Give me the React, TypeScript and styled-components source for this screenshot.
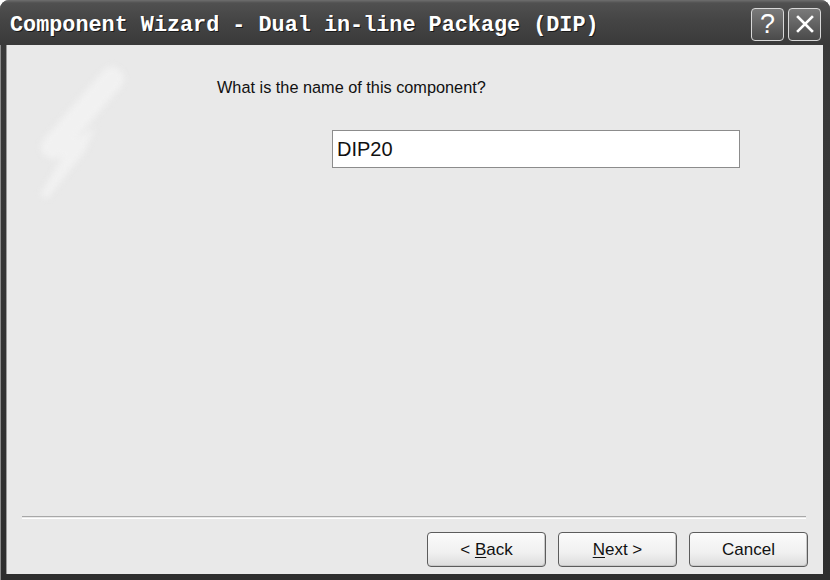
import React from "react";
import styled, { createGlobalStyle } from "styled-components";

const Global = createGlobalStyle`
  html, body { margin: 0; padding: 0; background: #ffffff; }
  body { width: 830px; height: 580px; overflow: hidden; }
`;

const Window = styled.div`
  width: 830px;
  height: 580px;
  box-sizing: border-box;
  display: flex;
  flex-direction: column;
  background: linear-gradient(#5c5c5c, #3a3a3a 40px, #2e2e2e);
  border-radius: 9px 9px 0 0;
  padding: 0 7px 6px 6px;
  box-shadow: inset 1px 1px 0 #8a8a8a;
`;

const TitleBar = styled.div`
  height: 45px;
  flex: none;
  display: flex;
  align-items: center;
  justify-content: space-between;
  margin: 0 -7px 0 -6px;
  padding-left: 10px;
  padding-right: 9px;
  background: linear-gradient(#6e6e6e 0px, #505050 3px, #454545 20px, #3a3a3a 44px);
  border-radius: 9px 9px 0 0;
`;

const Title = styled.div`
  font-family: "Liberation Mono", "Courier New", monospace;
  font-weight: bold;
  font-size: 21.8px;
  color: #ffffff;
  text-shadow: 1px 1px 0 #1a1a1a;
  white-space: nowrap;
  padding-top: 5px;
`;

const CaptionButtons = styled.div`
  display: flex;
  gap: 4px;
  padding-top: 3px;
`;

const CaptionButton = styled.div`
  width: 31px;
  height: 31px;
  border: 1px solid #d8d8d8;
  border-radius: 4px;
  background: linear-gradient(#7a7a7a, #4a4a4a);
  display: flex;
  align-items: center;
  justify-content: center;
  color: #ffffff;
  font-family: "Liberation Sans", Arial, sans-serif;
  font-size: 27px;
  line-height: 1;
`;

const Body = styled.div`
  flex: 1;
  position: relative;
  display: flex;
  flex-direction: column;
  background: #e9e9e9;
  border-left: 1px solid #9a9a9a;
  overflow: hidden;
`;

const Watermark = styled.svg`
  position: absolute;
  left: 0;
  top: 0;
  filter: blur(3px);
`;

const Content = styled.div`
  position: relative;
  flex: 1;
  display: flex;
  flex-direction: column;
  padding: 32px 0 0 210px;
`;

const Label = styled.div`
  font-family: "Liberation Sans", Arial, sans-serif;
  font-size: 16.3px;
  line-height: 20px;
  color: #111111;
`;

const NameInput = styled.div`
  margin: 33px 0 0 115px;
  width: 402px;
  height: 36px;
  border: 1px solid #8c8c8c;
  background: #ffffff;
  display: flex;
  align-items: center;
  padding-left: 4px;
  font-family: "Liberation Sans", Arial, sans-serif;
  font-size: 20px;
  color: #111111;
`;

const Separator = styled.div`
  position: relative;
  margin: 0 17px 0 15px;
  height: 1px;
  border-top: 1px solid #a8a8a8;
  border-bottom: 1px solid #ffffff;
`;

const ButtonRow = styled.div`
  position: relative;
  display: flex;
  justify-content: flex-end;
  gap: 12px;
  padding: 13px 15px 7px 0;
`;

const Button = styled.div`
  width: 117px;
  height: 33px;
  border: 1px solid #5c5c5c;
  border-radius: 4px;
  background: linear-gradient(#fbfbfb, #f0f0f0 60%, #dcdcdc);
  box-shadow: inset -1px -1px 0 #c8c8c8;
  display: flex;
  align-items: center;
  justify-content: center;
  font-family: "Liberation Sans", Arial, sans-serif;
  font-size: 17px;
  color: #111111;
`;

const Mnemonic = styled.span`
  text-decoration: underline;
  text-underline-offset: 2px;
`;

export default function App() {
  return (
    <>
      <Global />
      <Window>
        <TitleBar>
          <Title>Component Wizard - Dual in-line Package (DIP)</Title>
          <CaptionButtons>
            <CaptionButton>?</CaptionButton>
            <CaptionButton>
              <svg width="20" height="20" viewBox="0 0 20 20">
                <path d="M3 3 L17 17 M17 3 L3 17" stroke="#ffffff" strokeWidth="2.6" strokeLinecap="square" />
              </svg>
            </CaptionButton>
          </CaptionButtons>
        </TitleBar>
        <Body>
          <Watermark width="140" height="170" viewBox="0 0 140 170">
            <path d="M105 34 L46 102" stroke="#f1f1f1" strokeWidth="24" strokeLinecap="round" fill="none" />
            <polygon points="88,82 78,106 40,154 33,150 52,118 60,100" fill="#f1f1f1" />
          </Watermark>
          <Content>
            <Label>What is the name of this component?</Label>
            <NameInput>DIP20</NameInput>
          </Content>
          <Separator />
          <ButtonRow>
            <Button>
              &lt;&nbsp;<Mnemonic>B</Mnemonic>ack
            </Button>
            <Button>
              <Mnemonic>N</Mnemonic>ext&nbsp;&gt;
            </Button>
            <Button>Cancel</Button>
          </ButtonRow>
        </Body>
      </Window>
    </>
  );
}
